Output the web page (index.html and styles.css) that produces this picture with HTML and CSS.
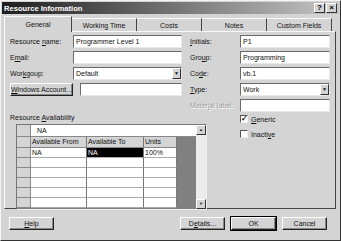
FILE: index.html
```html
<!DOCTYPE html>
<html lang="en">
<head>
    <meta charset="UTF-8">
    <meta name="viewport" content="width=device-width, initial-scale=1.0">
    <title>Resource Information</title>
    <link rel="stylesheet" href="styles.css">
</head>
<body>
    <div class="dialog">
        <div class="titlebar">
            <span class="title">Resource Information</span>
            <div class="caption-btns">
                <span class="cap-btn">?</span>
                <span class="cap-btn">×</span>
            </div>
        </div>

        <div class="tabs">
            <div class="tab active">General</div>
            <div class="tab">Working Time</div>
            <div class="tab">Costs</div>
            <div class="tab">Notes</div>
            <div class="tab">Custom Fields</div>
        </div>

        <div class="panel">
            <div class="form">
                <label>Resource <u>n</u>ame:</label>
                <div class="field">Programmer Level 1</div>
                <span></span>
                <label><u>I</u>nitials:</label>
                <div class="field">P1</div>

                <label>E<u>m</u>ail:</label>
                <div class="field"></div>
                <span></span>
                <label>Gro<u>u</u>p:</label>
                <div class="field">Programming</div>

                <label>Wor<u>k</u>goup:</label>
                <div class="field select">Default<span class="drop">▼</span></div>
                <span></span>
                <label>Co<u>d</u>e:</label>
                <div class="field">vb.1</div>

                <div class="btn win-btn"><u>W</u>indows Account...</div>
                <div class="field short"></div>
                <span></span>
                <label><u>T</u>ype:</label>
                <div class="field select">Work<span class="drop">▼</span></div>

                <span></span><span></span><span></span>
                <label class="disabled">Mater<u>i</u>al label:</label>
                <div class="field"></div>

                <div class="avail">
                    <label>Resource <u>A</u>vailability</label>
                    <div class="grid">
                        <div class="grid-main">
                            <div class="grid-row entry">
                                <div class="rh"></div>
                                <div class="entry-cell">NA</div>
                            </div>
                            <div class="grid-row head">
                                <div class="rh"></div>
                                <div class="c c1">Available From</div>
                                <div class="c c2">Available To</div>
                                <div class="c c3">Units</div>
                                <div class="c dark"></div>
                            </div>
                            <div class="grid-row">
                                <div class="rh"></div>
                                <div class="c c1">NA</div>
                                <div class="c c2 sel">NA</div>
                                <div class="c c3">100%</div>
                                <div class="c dark"></div>
                            </div>
                            <div class="grid-row"><div class="rh"></div><div class="c c1"></div><div class="c c2"></div><div class="c c3"></div><div class="c dark"></div></div>
                            <div class="grid-row"><div class="rh"></div><div class="c c1"></div><div class="c c2"></div><div class="c c3"></div><div class="c dark"></div></div>
                            <div class="grid-row"><div class="rh"></div><div class="c c1"></div><div class="c c2"></div><div class="c c3"></div><div class="c dark"></div></div>
                            <div class="grid-row"><div class="rh"></div><div class="c c1"></div><div class="c c2"></div><div class="c c3"></div><div class="c dark"></div></div>
                            <div class="grid-row"><div class="rh"></div><div class="c c1"></div><div class="c c2"></div><div class="c c3"></div><div class="c dark"></div></div>
                        </div>
                        <div class="scrollbar">
                            <div class="sb-btn">▲</div>
                            <div class="sb-track"></div>
                            <div class="sb-btn">▼</div>
                        </div>
                    </div>
                </div>

                <div class="checks">
                    <div class="check"><span class="box checked">✓</span><span><u>G</u>eneric</span></div>
                    <div class="check"><span class="box"></span><span>Inacti<u>v</u>e</span></div>
                </div>
            </div>
        </div>

        <div class="buttons">
            <div class="btn help-btn"><u>H</u>elp</div>
            <div class="right-btns">
                <div class="btn">D<u>e</u>tails...</div>
                <div class="btn ok">OK</div>
                <div class="btn">Cancel</div>
            </div>
        </div>
    </div>
</body>
</html>
```

FILE: styles.css
```css
body {
    margin: 0;
    background-color: #d4d4d4;
    font-family: "Liberation Sans", Arial, sans-serif;
    font-size: 7px;
    color: #111;
}
u {
    text-decoration: underline;
}
.dialog {
    width: 341px;
    height: 241px;
    box-sizing: border-box;
    border: 1px solid #f4f4f4;
    border-right-color: #333;
    border-bottom-color: #333;
    background-color: #d4d4d4;
    padding: 1px;
    display: flex;
    flex-direction: column;
}
.titlebar {
    height: 12px;
    background: linear-gradient(to right, #1e1e1e 0%, #6a6a6a 45%, #c6c6c6 100%);
    display: flex;
    align-items: center;
    justify-content: space-between;
    padding: 0 2px 0 2px;
}
.title {
    color: #fff;
    font-weight: bold;
    font-size: 7.6px;
}
.caption-btns {
    display: flex;
    gap: 1px;
}
.cap-btn {
    width: 9px;
    height: 8px;
    background-color: #d4d4d4;
    border: 1px solid #fff;
    border-right-color: #333;
    border-bottom-color: #333;
    font-size: 8px;
    font-weight: bold;
    line-height: 8px;
    text-align: center;
    color: #000;
}

/* tabs */
.tabs {
    display: flex;
    margin: 2px 0 0 2px;
    height: 15px;
    align-items: flex-end;
}
.tab {
    width: 65px;
    height: 13px;
    line-height: 13px;
    text-align: center;
    border-top: 1px solid #f8f8f8;
    border-right: 1px solid #444;
    box-sizing: border-box;
}
.tab.active {
    height: 16px;
    line-height: 15px;
    width: 68px;
    border-left: 1px solid #f8f8f8;
    margin-bottom: -1px;
    background-color: #d4d4d4;
    position: relative;
}

/* panel */
.panel {
    margin: 0 3px 0 2px;
    height: 178px;
    box-sizing: border-box;
    border: 1px solid #f8f8f8;
    border-right-color: #444;
    border-bottom-color: #444;
    padding: 3px 0 0 5px;
}
.form {
    display: grid;
    grid-template-columns: 63px 109px 8px 50px 90px;
    grid-auto-rows: 13px;
    row-gap: 3px;
    align-items: center;
}
.form label {
    white-space: nowrap;
}
.form label.disabled {
    color: #a0a0a0;
    text-shadow: 1px 1px 0 #fff;
}
.field {
    height: 13px;
    box-sizing: border-box;
    background-color: #fff;
    border: 1px solid #6a6a6a;
    border-right-color: #e8e8e8;
    border-bottom-color: #e8e8e8;
    padding-left: 2px;
    line-height: 11px;
    position: relative;
}
.field.short {
    margin-left: 7px;
}
.drop {
    position: absolute;
    right: 0;
    top: 0;
    width: 9px;
    height: 11px;
    box-sizing: border-box;
    background-color: #d4d4d4;
    border: 1px solid #fff;
    border-right-color: #333;
    border-bottom-color: #333;
    font-size: 5px;
    line-height: 9px;
    text-align: center;
}
.btn {
    height: 13px;
    box-sizing: border-box;
    border: 1px solid #fff;
    border-right-color: #222;
    border-bottom-color: #222;
    box-shadow: inset -1px -1px 0 #888;
    text-align: center;
    line-height: 11px;
    white-space: nowrap;
}
.win-btn {
    width: 63px;
}

/* availability grid */
.avail {
    grid-column: 1 / 5;
    grid-row: 6 / 8;
    align-self: start;
    margin-top: -1px;
}
.avail label {
    display: block;
    height: 10px;
}
.grid {
    margin: 0 0 0 6px;
    width: 191px;
    height: 86px;
    box-sizing: border-box;
    border: 1px solid #777;
    border-right-color: #eee;
    border-bottom-color: #eee;
    display: flex;
    background-color: #808080;
}
.grid-main {
    flex: 1;
    display: flex;
    flex-direction: column;
}
.grid-row {
    display: flex;
    height: 10px;
    box-sizing: border-box;
}
.grid-row.entry {
    height: 12px;
}
.grid-row.head {
    height: 11px;
}
.rh {
    width: 14px;
    background-color: #d4d4d4;
    border-right: 1px solid #888;
    border-bottom: 1px solid #888;
    box-sizing: border-box;
}
.entry-cell {
    flex: 1;
    background-color: #fff;
    border-bottom: 1px solid #888;
    padding-left: 6px;
    line-height: 11px;
}
.c {
    background-color: #fff;
    border-right: 1px solid #777;
    border-bottom: 1px solid #aaa;
    box-sizing: border-box;
    padding-left: 1px;
    line-height: 9px;
    white-space: nowrap;
    overflow: hidden;
}
.head .c {
    background-color: #d4d4d4;
    border-bottom-color: #888;
    line-height: 10px;
}
.c1 { width: 56px; }
.c2 { width: 57px; }
.c3 { width: 33px; }
.c.dark {
    flex: 1;
    background-color: #808080;
    border: none;
}
.head .c.dark {
    background-color: #808080;
}
.c.sel {
    background-color: #000;
    color: #fff;
}
.scrollbar {
    width: 10px;
    display: flex;
    flex-direction: column;
    background-color: #ececec;
}
.sb-btn {
    height: 10px;
    box-sizing: border-box;
    background-color: #d4d4d4;
    border: 1px solid #fff;
    border-right-color: #333;
    border-bottom-color: #333;
    font-size: 4px;
    line-height: 8px;
    text-align: center;
}
.sb-track {
    flex: 1;
}

/* checkboxes */
.checks {
    grid-column: 5;
    grid-row: 6 / 8;
    align-self: start;
    display: flex;
    flex-direction: column;
    gap: 7px;
    margin-top: 0;
}
.check {
    display: flex;
    align-items: center;
    gap: 3px;
}
.box {
    width: 8px;
    height: 8px;
    box-sizing: border-box;
    background-color: #fff;
    border: 1px solid #555;
    border-right-color: #eee;
    border-bottom-color: #eee;
    font-size: 8px;
    line-height: 6px;
    font-weight: bold;
    text-align: center;
}

/* bottom buttons */
.buttons {
    display: flex;
    justify-content: space-between;
    align-items: center;
    padding: 8px 12px 0 7px;
}
.buttons .btn {
    width: 45px;
}
.right-btns {
    display: flex;
    gap: 6px;
}
.btn.ok {
    outline: 1px solid #000;
}
```
